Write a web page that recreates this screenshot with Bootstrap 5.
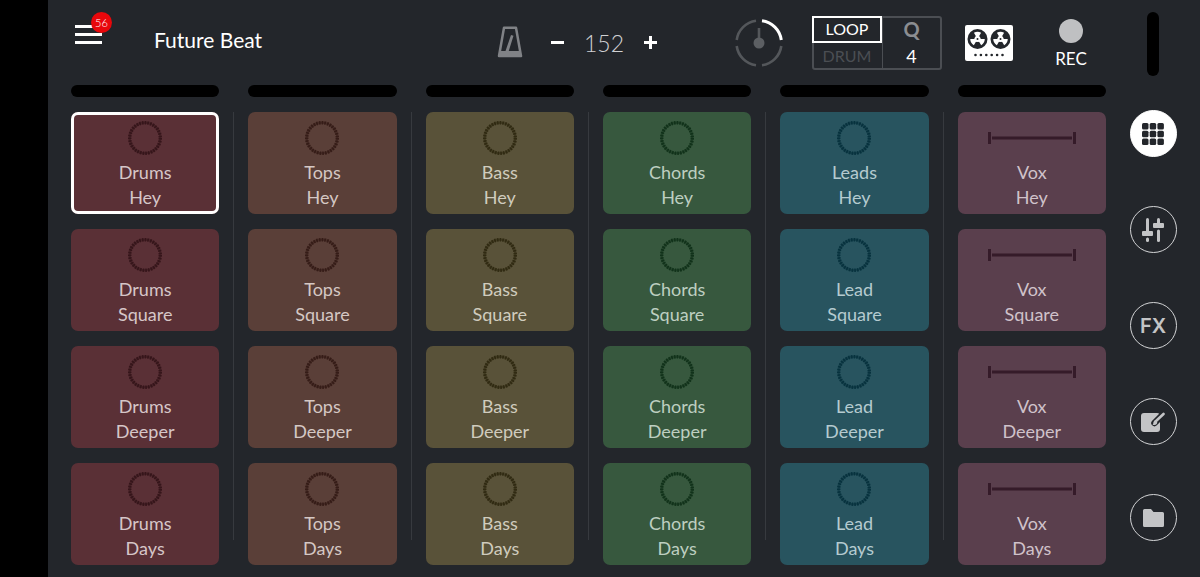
<!DOCTYPE html>
<html lang="en">
<head>
<meta charset="utf-8">
<meta name="viewport" content="width=device-width, initial-scale=1">
<title>Future Beat</title>
<link href="https://cdn.jsdelivr.net/npm/bootstrap@5.3.0/dist/css/bootstrap.min.css" rel="stylesheet">
<style>
  body { background: #23262b; color: #fff; font-family: Lato, "Open Sans", sans-serif; }
  button { background: none; border: 0; padding: 0; color: inherit; line-height: 1; }
  svg { display: block; }
  .edge { width: 48px; background: #000; }
  .topbar { height: 85px; padding-left: 4px; }
  .stage { padding: 0 0 12px 23px; }
  .menu-btn { width: 27px; height: 19px; margin-bottom: 16px; }
  .menu-count { top: -13px; left: 16px; width: 21px; height: 21px; background: #e8070b; font-size: 11px; font-weight: 300; }
  .song { font-size: 21px; margin-left: 52px; margin-bottom: 6px; }
  .tempo { margin-right: 78px; }
  .bpm { width: 64px; font-size: 23px; font-weight: 300; color: #d0d1d3; text-align: center; line-height: 24px; }
  .dial { margin-right: 29px; }
  .modes { display: grid; grid-template-columns: 69px 57px; height: 54px; margin-right: 23px; border: 2px solid #4b4e53; border-radius: 3px; }
  .mode-col { display: grid; grid-template-rows: 27px 27px; margin: -2px 0; font-size: 16px; }
  .mode-col:first-child { margin-left: -2px; border-right: 1px solid #4b4e53; }
  .mode-on { border: 2px solid #fff; }
  .mode-off { color: #4b4e53; }
  .quant { color: #8b8d91; font-size: 20px; font-weight: 700; }
  .quant-val { font-size: 18px; }
  .rec { width: 70px; margin-left: 23px; font-size: 17px; }
  .rec-dot { width: 24px; height: 24px; background: #bfc0c2; margin-bottom: 7px; }
  .meter { height: 12px; border-radius: 6px; background: #000; margin-bottom: 15px; }
  .tracks { gap: 14px; }
  .track { flex: 1 1 0; min-width: 0; }
  .rule { width: 1px; background: #373a3f; margin: 27px 0 25px; }
  .pads { gap: 15px; }
  .pad { flex: 1 1 0; min-height: 102px; padding-top: 9px; border-radius: 7px; background: var(--pad); color: var(--ink); font-size: 18px; line-height: 25px; display: flex; flex-direction: column; align-items: center; }
  .pad svg { margin-bottom: 5px; color: var(--mark); }
  .pad.active { box-shadow: inset 0 0 0 3px #fff; }
  .red    { --pad: #5a3036; --ink: #d6c6c8; --mark: #35151a; }
  .brown  { --pad: #5a3f38; --ink: #d5c8c4; --mark: #351c17; }
  .olive  { --pad: #595239; --ink: #d0ccbe; --mark: #302a12; }
  .green  { --pad: #37583e; --ink: #becfc1; --mark: #11321a; }
  .teal   { --pad: #28545f; --ink: #b5cbd0; --mark: #07323e; }
  .purple { --pad: #5a3f4d; --ink: #d0c2ca; --mark: #351b29; }
  .rail { width: 94px; padding: 12px 0 36px; }
  .rail-meter { width: 12px; height: 64px; border-radius: 6px; background: #000; margin-bottom: 34px; }
  .rail nav { gap: 49px; }
  .round-btn { width: 47px; height: 47px; border: 1px solid #d3d4d6; border-radius: 50%; color: #c3c4c6; display: flex; align-items: center; justify-content: center; font: 600 20px Inter, sans-serif; }
  .round-btn.active { background: #fff; border-color: #fff; color: #23262b; }
</style>
</head>
<body>
<svg width="0" height="0" class="position-absolute" aria-hidden="true">
  <symbol id="ring" viewBox="0 0 34 34"><circle cx="17" cy="17" r="15.3" fill="none" stroke="currentColor" stroke-width="2" opacity=".5"/><circle cx="17" cy="17" r="15.3" fill="none" stroke="currentColor" stroke-width="3.400" stroke-dasharray="1.700 1.040"/></symbol>
  <symbol id="shot" viewBox="0 0 90 34"><path d="M1 11h3v12H1zM86 11h3v12h-3zM5 15.500h80v3H5z" fill="currentColor"/></symbol>
</svg>
<div class="d-flex min-vh-100">
  <div class="edge flex-shrink-0"></div>
  <main class="stage flex-grow-1 d-flex flex-column">
    <header class="topbar d-flex align-items-center">
      <button class="menu-btn position-relative" aria-label="Menu">
        <svg width="27" height="19" viewBox="0 0 27 19" fill="#fff"><path d="M0 0h27v3H0zM0 8h27v3H0zM0 16h27v3H0z"/></svg>
        <span class="menu-count position-absolute rounded-circle d-flex align-items-center justify-content-center">56</span>
      </button>
      <span class="song">Future Beat</span>
      <div class="tempo d-flex align-items-center ms-auto">
        <button class="me-4" aria-label="Metronome">
          <svg width="26" height="33" viewBox="0 0 26 33"><path d="M7 1.800h12L24 30H2z" fill="none" stroke="#808286" stroke-width="2.500" stroke-linejoin="round"/><path d="M3 25h20l1 6H2zM14 9l2.500 .8-5 16-3-.8z" fill="#808286"/></svg>
        </button>
        <button class="ms-1" aria-label="Slower"><svg width="13" height="13"><path d="M0 5h13v3H0z" fill="#fff"/></svg></button>
        <div class="px-2"><div class="bpm">152</div></div>
        <button aria-label="Faster"><svg width="13" height="13"><path d="M0 5h13v3H0zM5 0h3v13H5z" fill="#fff"/></svg></button>
      </div>
      <button class="dial" aria-label="Beat position">
        <svg width="48" height="48" viewBox="0 0 48 48" fill="none" stroke="#54575b" stroke-width="2.600"><path d="M27 1.700A22.500 22.500 0 0 1 46.300 21" stroke="#fff" stroke-width="3"/><path d="M46.300 27A22.500 22.500 0 0 1 27 46.300M21 46.300A22.500 22.500 0 0 1 1.700 27M1.700 21A22.500 22.500 0 0 1 21 1.700"/><path d="M24 9v15"/><circle cx="24" cy="24" r="5.500" fill="#5c5f63" stroke="none"/></svg>
      </button>
      <div class="modes">
        <div class="mode-col"><button class="mode-on">LOOP</button><button class="mode-off">DRUM</button></div>
        <div class="mode-col"><button class="quant" aria-label="Quantize">Q</button><button class="quant-val">4</button></div>
      </div>
      <button aria-label="Tape deck">
        <svg width="48" height="36" viewBox="0 0 48 36"><rect width="48" height="36" rx="2" fill="#fff"/>
          <g id="reel" transform="translate(12.500 14)"><circle r="10" fill="#23262b"/><g fill="#fff"><circle r="3"/><path id="spoke" d="M-1.700 0L-1.700-3L-3.600-6.300Q0-8.300 3.600-6.300L1.700-3V0z"/><use href="#spoke" transform="rotate(120)"/><use href="#spoke" transform="rotate(240)"/></g><circle r="1" fill="#23262b"/></g>
          <use href="#reel" x="23"/>
          <path d="M10.500 30h28" stroke="#23262b" stroke-width="2.600" stroke-linecap="round" stroke-dasharray="0 5.400"/></svg>
      </button>
      <button class="rec d-flex flex-column align-items-center"><span class="rec-dot rounded-circle"></span>REC</button>
    </header>

    <section class="tracks d-flex flex-grow-1">
      <div class="track red d-flex flex-column"><div class="meter"></div>
        <div class="pads d-flex flex-column flex-grow-1">
          <button class="pad active"><svg width="34" height="34"><use href="#ring"/></svg><span>Drums<br>Hey</span></button>
          <button class="pad"><svg width="34" height="34"><use href="#ring"/></svg><span>Drums<br>Square</span></button>
          <button class="pad"><svg width="34" height="34"><use href="#ring"/></svg><span>Drums<br>Deeper</span></button>
          <button class="pad"><svg width="34" height="34"><use href="#ring"/></svg><span>Drums<br>Days</span></button>
        </div>
      </div>
      <div class="rule"></div>
      <div class="track brown d-flex flex-column"><div class="meter"></div>
        <div class="pads d-flex flex-column flex-grow-1">
          <button class="pad"><svg width="34" height="34"><use href="#ring"/></svg><span>Tops<br>Hey</span></button>
          <button class="pad"><svg width="34" height="34"><use href="#ring"/></svg><span>Tops<br>Square</span></button>
          <button class="pad"><svg width="34" height="34"><use href="#ring"/></svg><span>Tops<br>Deeper</span></button>
          <button class="pad"><svg width="34" height="34"><use href="#ring"/></svg><span>Tops<br>Days</span></button>
        </div>
      </div>
      <div class="rule"></div>
      <div class="track olive d-flex flex-column"><div class="meter"></div>
        <div class="pads d-flex flex-column flex-grow-1">
          <button class="pad"><svg width="34" height="34"><use href="#ring"/></svg><span>Bass<br>Hey</span></button>
          <button class="pad"><svg width="34" height="34"><use href="#ring"/></svg><span>Bass<br>Square</span></button>
          <button class="pad"><svg width="34" height="34"><use href="#ring"/></svg><span>Bass<br>Deeper</span></button>
          <button class="pad"><svg width="34" height="34"><use href="#ring"/></svg><span>Bass<br>Days</span></button>
        </div>
      </div>
      <div class="rule"></div>
      <div class="track green d-flex flex-column"><div class="meter"></div>
        <div class="pads d-flex flex-column flex-grow-1">
          <button class="pad"><svg width="34" height="34"><use href="#ring"/></svg><span>Chords<br>Hey</span></button>
          <button class="pad"><svg width="34" height="34"><use href="#ring"/></svg><span>Chords<br>Square</span></button>
          <button class="pad"><svg width="34" height="34"><use href="#ring"/></svg><span>Chords<br>Deeper</span></button>
          <button class="pad"><svg width="34" height="34"><use href="#ring"/></svg><span>Chords<br>Days</span></button>
        </div>
      </div>
      <div class="rule"></div>
      <div class="track teal d-flex flex-column"><div class="meter"></div>
        <div class="pads d-flex flex-column flex-grow-1">
          <button class="pad"><svg width="34" height="34"><use href="#ring"/></svg><span>Leads<br>Hey</span></button>
          <button class="pad"><svg width="34" height="34"><use href="#ring"/></svg><span>Lead<br>Square</span></button>
          <button class="pad"><svg width="34" height="34"><use href="#ring"/></svg><span>Lead<br>Deeper</span></button>
          <button class="pad"><svg width="34" height="34"><use href="#ring"/></svg><span>Lead<br>Days</span></button>
        </div>
      </div>
      <div class="rule"></div>
      <div class="track purple d-flex flex-column"><div class="meter"></div>
        <div class="pads d-flex flex-column flex-grow-1">
          <button class="pad"><svg width="90" height="34"><use href="#shot"/></svg><span>Vox<br>Hey</span></button>
          <button class="pad"><svg width="90" height="34"><use href="#shot"/></svg><span>Vox<br>Square</span></button>
          <button class="pad"><svg width="90" height="34"><use href="#shot"/></svg><span>Vox<br>Deeper</span></button>
          <button class="pad"><svg width="90" height="34"><use href="#shot"/></svg><span>Vox<br>Days</span></button>
        </div>
      </div>
    </section>
  </main>
  <aside class="rail flex-shrink-0 d-flex flex-column align-items-center">
    <div class="rail-meter"></div>
    <nav class="d-flex flex-column">
      <button class="round-btn active" aria-label="Pads"><svg width="22" height="22" viewBox="0 0 22 22" fill="currentColor"><rect width="6.500" height="6.500" rx="1.500"/><rect x="7.700" width="6.500" height="6.500" rx="1.500"/><rect x="15.400" width="6.500" height="6.500" rx="1.500"/><rect y="7.700" width="6.500" height="6.500" rx="1.500"/><rect x="7.700" y="7.700" width="6.500" height="6.500" rx="1.500"/><rect x="15.400" y="7.700" width="6.500" height="6.500" rx="1.500"/><rect y="15.400" width="6.500" height="6.500" rx="1.500"/><rect x="7.700" y="15.400" width="6.500" height="6.500" rx="1.500"/><rect x="15.400" y="15.400" width="6.500" height="6.500" rx="1.500"/></svg></button>
      <button class="round-btn" aria-label="Mixer"><svg width="22" height="24" viewBox="0 0 22 24" fill="currentColor"><rect x="4" width="3" height="16" rx="1.500"/><rect y="13" width="11" height="5" rx="1"/><rect x="4" y="19.500" width="3" height="4.500" rx="1.500"/><rect x="15" width="3" height="8" rx="1.500"/><rect x="11" y="5" width="11" height="5" rx="1"/><rect x="15" y="11.500" width="3" height="12.500" rx="1.500"/></svg></button>
      <button class="round-btn">FX</button>
      <button class="round-btn" aria-label="Edit"><svg width="24" height="22" viewBox="0 0 24 22"><rect y="2" width="19" height="19" rx="3" fill="currentColor"/><path d="M22 3.500L13.500 12" stroke="#23262b" stroke-width="6.500" stroke-linecap="round"/><path d="M22.500 3L14.500 10.500" stroke="currentColor" stroke-width="2.600" stroke-linecap="round"/><path d="M14 9.500c2 .3 2.700 1.500 2 3-.8 1.600-2.800 1.800-4.500 1.500 1-1 .6-2 1-3 .3-.8.800-1.300 1.500-1.500z" fill="currentColor"/></svg></button>
      <button class="round-btn" aria-label="Library"><svg width="21" height="18" viewBox="0 0 21 18" fill="currentColor"><path d="M1.500 0H8l2.500 3h9q1.500 0 1.500 1.500v12q0 1.500-1.500 1.500h-18Q0 18 0 16.500v-15Q0 0 1.500 0z"/></svg></button>
    </nav>
  </aside>
</div>
<script src="https://cdn.jsdelivr.net/npm/bootstrap@5.3.0/dist/js/bootstrap.bundle.min.js"></script>
</body>
</html>
